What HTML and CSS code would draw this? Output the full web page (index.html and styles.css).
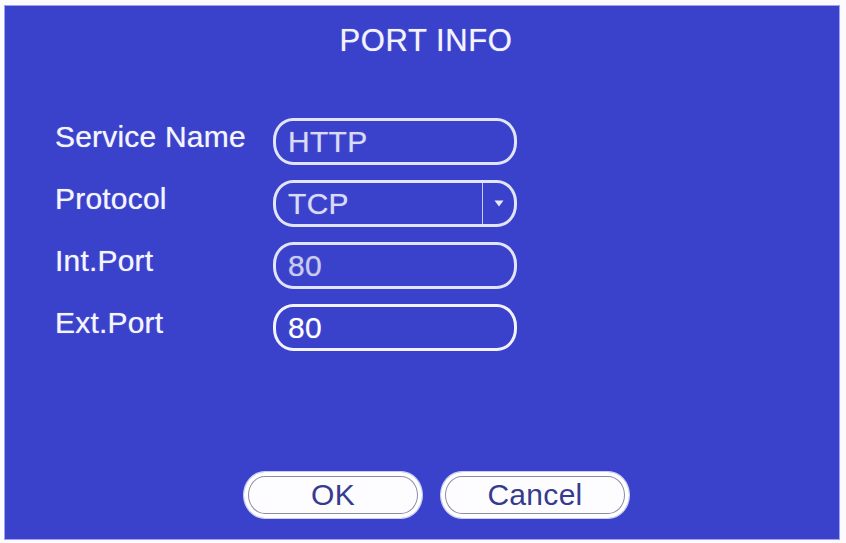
FILE: index.html
```html
<!DOCTYPE html>
<html lang="en">
<head>
<meta charset="utf-8">
<title>Port Info</title>
<link rel="stylesheet" href="styles.css">
</head>
<body>
  <div class="dialog">
    <h1 class="title">PORT INFO</h1>

    <div class="form">
      <span class="label">Service Name</span>
      <div class="field"><span class="value">HTTP</span></div>

      <span class="label">Protocol</span>
      <div class="field select">
        <span class="value">TCP</span>
        <span class="drop">
          <svg width="10" height="7" viewBox="0 0 10 7"><path d="M0.5 0.5 L9.5 0.5 L5 6.5 Z" fill="#e8eaff"/></svg>
        </span>
      </div>

      <span class="label">Int.Port</span>
      <div class="field"><span class="value dim">80</span></div>

      <span class="label">Ext.Port</span>
      <div class="field active"><span class="value bright">80</span></div>
    </div>

    <div class="actions">
      <button class="btn ok">OK</button>
      <button class="btn cancel">Cancel</button>
    </div>
  </div>
</body>
</html>
```

FILE: styles.css
```css
html, body {
  margin: 0;
  padding: 0;
  background: #fbfbff;
}

body {
  width: 846px;
  height: 543px;
  font-family: "Liberation Sans", Arial, sans-serif;
}

.dialog {
  box-sizing: border-box;
  margin: 5px 0 0 4px;
  width: 836px;
  height: 535px;
  border: 1px solid #9ea3ec;
  background: #3a42cc;
  display: flex;
  flex-direction: column;
  padding: 18px 0 20px 0;
}

.title {
  margin: 0;
  font-size: 31px;
  line-height: 34px;
  font-weight: normal;
  letter-spacing: 0.6px;
  text-align: center;
  color: #f2f3ff;
  padding-left: 8px;
  text-shadow: 0 0 1px rgba(230, 232, 255, 0.7);
}

.form {
  margin-top: 60px;
  padding-left: 50px;
  display: grid;
  grid-template-columns: 218px 244px;
  grid-auto-rows: 47px;
  row-gap: 15px;
}

.label {
  align-self: center;
  padding-bottom: 9px;
  font-size: 30px;
  letter-spacing: 0.2px;
  color: #f4f5ff;
  white-space: nowrap;
  text-shadow: 0 0 1px rgba(230, 232, 255, 0.7);
}

.field {
  box-sizing: border-box;
  height: 47px;
  border: 3px solid #e2e4fb;
  border-radius: 20px / 22px;
  display: flex;
  align-items: center;
  overflow: hidden;
}

.field.active {
  border-color: #f2f3ff;
}

.value {
  flex: 1;
  padding-left: 12px;
  font-size: 30px;
  line-height: 41px;
  letter-spacing: 0.3px;
  color: #d9dbf5;
  text-shadow: 0 0 1px rgba(220, 222, 250, 0.6);
}

.value.dim {
  color: #c9cbea;
}

.value.bright {
  color: #ffffff;
}

.drop {
  align-self: stretch;
  width: 31px;
  border-left: 1px solid #c8cbf2;
  display: flex;
  align-items: center;
  justify-content: center;
}

.actions {
  margin-top: auto;
  padding-left: 238px;
  display: flex;
  gap: 17px;
}

.btn {
  box-sizing: border-box;
  height: 48px;
  border: 1px solid #c9ccf6;
  border-radius: 22px / 24px;
  background: #fdfdff;
  box-shadow: inset 0 0 0 4px #ffffff, inset 0 0 0 5px #8b8da6;
  font-family: "Liberation Sans", Arial, sans-serif;
  font-size: 30px;
  letter-spacing: 0.3px;
  color: #353b8e;
  padding: 0;
}

.btn.ok {
  width: 180px;
}

.btn.cancel {
  width: 190px;
}
```
